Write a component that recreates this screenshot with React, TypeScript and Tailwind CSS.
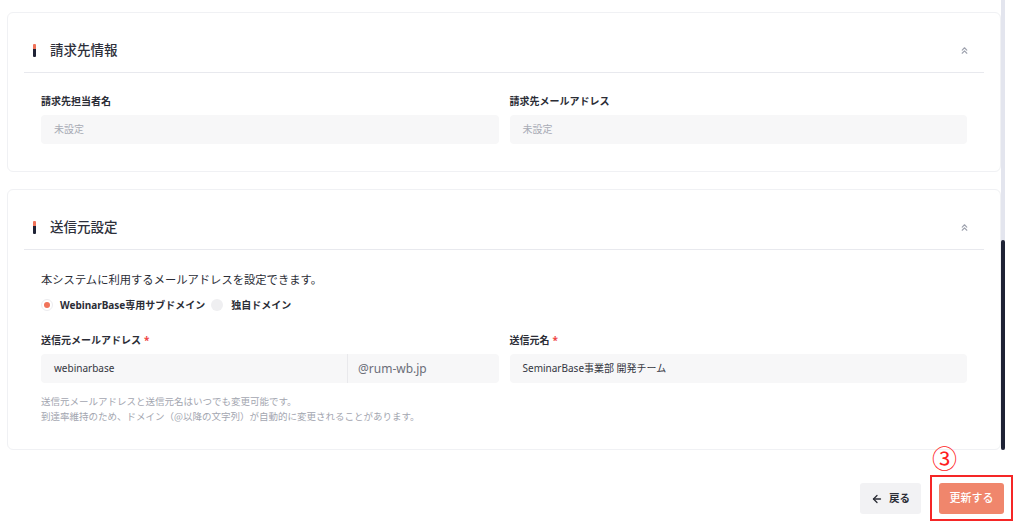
import React from "react";
import { ChevronsUp, ArrowLeft } from "lucide-react";

const SectionHeader: React.FC<{ title: string }> = ({ title }) => (
  <div className="mx-[16px] flex h-[44px] items-center justify-between border-b border-[#e8e9ee] pl-[9px] pr-[14px]">
    <div className="flex items-center gap-[14px]">
      <div className="flex h-[13px] w-[3px] flex-col overflow-hidden rounded-[1px]">
        <div className="h-[5px] bg-[#f0735a]" />
        <div className="flex-1 bg-[#1f2235]" />
      </div>
      <span className="text-[13.5px] font-medium text-[#2d2f3a]">{title}</span>
    </div>
    <ChevronsUp size={11} strokeWidth={2.5} className="text-[#9ea2ae]" />
  </div>
);

const Label: React.FC<{ text: string; required?: boolean }> = ({ text, required }) => (
  <div className="mb-[6px] h-[16px] text-[10px] font-bold leading-[16px] text-[#2b2d36]">
    {text}
    {required && <span className="ml-[3px] text-[#ef4444]">*</span>}
  </div>
);

const Field: React.FC<{ value: string; placeholder?: boolean }> = ({ value, placeholder }) => (
  <div
    className={`flex h-[29px] items-center rounded-[4px] bg-[#f7f7f8] px-[13px] text-[10px] ${
      placeholder ? "text-[#a8abb5]" : "text-[#34363f]"
    }`}
  >
    {value}
  </div>
);

export default function App() {
  return (
    <div className="h-[527px] w-[1024px] overflow-hidden bg-white font-['Noto_Sans','Noto_Sans_CJK_JP',sans-serif]">
      <div className="flex h-[450px]">
        <div className="flex w-[1001px] flex-col gap-[17px] pl-[7px] pt-[12px]">
          {/* 請求先情報 */}
          <section className="rounded-[6px] border border-[#f0f1f4] pb-[27px] pt-[16px]">
            <SectionHeader title="請求先情報" />
            <div className="grid grid-cols-2 gap-[11px] px-[33px] pt-[20px]">
              <div>
                <Label text="請求先担当者名" />
                <Field value="未設定" placeholder />
              </div>
              <div>
                <Label text="請求先メールアドレス" />
                <Field value="未設定" placeholder />
              </div>
            </div>
          </section>

          {/* 送信元設定 */}
          <section className="rounded-[6px] border border-[#f0f1f4] pb-[25px] pt-[16px]">
            <SectionHeader title="送信元設定" />
            <div className="px-[33px] pt-[21px]">
              <p className="text-[11.3px] leading-[18px] text-[#2b2d36]">
                本システムに利用するメールアドレスを設定できます。
              </p>
              <div className="mt-[8px] flex h-[16px] items-center text-[10px] font-bold text-[#2b2d36]">
                <span className="mr-[7px] flex h-[12px] w-[12px] items-center justify-center rounded-full border border-[#ececef] bg-white">
                  <span className="h-[6px] w-[6px] rounded-full bg-[#f0735a]" />
                </span>
                <span>WebinarBase専用サブドメイン</span>
                <span className="ml-[6px] mr-[8px] h-[12px] w-[12px] rounded-full bg-[#efeff1]" />
                <span>独自ドメイン</span>
              </div>
              <div className="mt-[19px] grid grid-cols-2 gap-[11px]">
                <div>
                  <Label text="送信元メールアドレス" required />
                  <div className="flex h-[29px] rounded-[4px] bg-[#f7f7f8]">
                    <div className="flex w-[306px] items-center px-[13px] text-[10px] text-[#34363f]">
                      webinarbase
                    </div>
                    <div className="flex flex-1 items-center border-l border-[#e9e9ec] px-[10px] text-[12px] text-[#6b6e78]">
                      @rum-wb.jp
                    </div>
                  </div>
                </div>
                <div>
                  <Label text="送信元名" required />
                  <Field value="SeminarBase事業部 開発チーム" />
                </div>
              </div>
              <div className="mt-[11px] font-['Noto_Sans_CJK_JP',sans-serif] text-[9.5px] leading-[15px] text-[#a3a6b0]">
                <p>送信元メールアドレスと送信元名はいつでも変更可能です。</p>
                <p>到達率維持のため、ドメイン（@以降の文字列）が自動的に変更されることがあります。</p>
              </div>
            </div>
          </section>
        </div>

        {/* scrollbar */}
        <div className="flex w-[4px] flex-col bg-[#e3e5ee]">
          <div className="h-[240px]" />
          <div className="flex-1 rounded-[2px] bg-[#1e2235]" />
        </div>
      </div>

      {/* footer buttons */}
      <div className="flex justify-end gap-[18px] pr-[20px] pt-[33px]">
        <button className="flex h-[31px] w-[61px] items-center justify-center gap-[6px] rounded-[3px] bg-[#f2f2f4] text-[10.5px] font-bold text-[#2b2d36]">
          <ArrowLeft size={12} strokeWidth={2.6} />
          戻る
        </button>
        <div className="relative">
          <span className="absolute left-[-7px] top-[-40px] text-[25px] leading-[28px] text-[#ff2020] font-['Noto_Sans_CJK_JP',sans-serif]">
            ③
          </span>
          <div className="absolute left-[-9px] top-[-8px] h-[46px] w-[83px] border-2 border-[#f52626]" />
          <button className="flex h-[31px] w-[65px] items-center justify-center rounded-[3px] bg-[#f0866c] text-[11px] font-medium text-white">
            更新する
          </button>
        </div>
      </div>
    </div>
  );
}
